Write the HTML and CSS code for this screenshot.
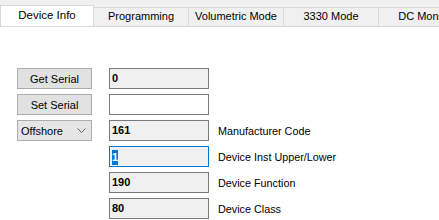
FILE: index.html
```html
<!DOCTYPE html>
<html lang="en">

<head>
    <meta charset="UTF-8">
    <title>Device Info</title>
    <link rel="stylesheet" href="styles.css">
</head>

<body>
    <div class="tabs">
        <div class="tab active">Device Info</div>
        <div class="tab">Programming</div>
        <div class="tab">Volumetric Mode</div>
        <div class="tab">3330 Mode</div>
        <div class="tab">DC Monitor</div>
    </div>

    <div class="page">
        <div class="row">
            <button class="btn">Get Serial</button>
            <div class="field readonly">0</div>
        </div>
        <div class="row">
            <button class="btn">Set Serial</button>
            <div class="field"></div>
        </div>
        <div class="row">
            <div class="select">
                <span>Offshore</span>
                <svg width="9" height="6" viewBox="0 0 9 6"><path d="M0.5 0.5 L4.5 4.5 L8.5 0.5" fill="none" stroke="#606060" stroke-width="1"/></svg>
            </div>
            <div class="field readonly">161</div>
            <span class="label">Manufacturer Code</span>
        </div>
        <div class="row">
            <div class="spacer"></div>
            <div class="field readonly focused"><span class="sel">1</span></div>
            <span class="label">Device Inst Upper/Lower</span>
        </div>
        <div class="row">
            <div class="spacer"></div>
            <div class="field readonly">190</div>
            <span class="label">Device Function</span>
        </div>
        <div class="row">
            <div class="spacer"></div>
            <div class="field readonly">80</div>
            <span class="label">Device Class</span>
        </div>
    </div>
</body>

</html>
```

FILE: styles.css
```css
* {
    margin: 0;
    padding: 0;
    box-sizing: border-box;
}

body {
    font-family: 'Liberation Sans', Arial, sans-serif;
    font-size: 11px;
    color: #000;
    background: #ffffff;
    overflow: hidden;
}

/* Tab strip */
.tabs {
    display: flex;
    align-items: flex-end;
    height: 27px;
    background: #f0f0f0;
    border-bottom: 1px solid #dadada;
    white-space: nowrap;
    overflow: hidden;
}

.tab {
    flex: none;
    width: 96px;
    height: 19px;
    margin-left: -1px;
    border: 1px solid #dadada;
    border-bottom: none;
    background: #f0f0f0;
    font-size: 11px;
    line-height: 17px;
    text-align: center;
}

.tab.active {
    position: relative;
    width: 94px;
    height: 22px;
    margin-left: 0;
    margin-bottom: -1px;
    background: #ffffff;
    font-size: 11.5px;
    line-height: 19px;
    z-index: 1;
}

/* Page content */
.page {
    padding: 41px 0 0 17px;
    display: flex;
    flex-direction: column;
    gap: 5px;
}

.row {
    display: flex;
    align-items: center;
    height: 21px;
}

.btn,
.select,
.spacer {
    width: 75px;
    height: 21px;
    margin-right: 17px;
}

.btn {
    font-family: inherit;
    font-size: 11px;
    background: #e1e1e1;
    border: 1px solid #adadad;
    color: #000;
}

.select {
    display: flex;
    align-items: center;
    justify-content: space-between;
    padding: 0 5px 0 3px;
    background: #e5e5e5;
    border: 1px solid #adadad;
}

.field {
    width: 100px;
    height: 21px;
    border: 1px solid #7a7a7a;
    background: #ffffff;
    padding-left: 2px;
    font-weight: bold;
    font-size: 11px;
    line-height: 19px;
}

.field.readonly {
    background: #f0f0f0;
}

.field.focused {
    border-color: #0078d7;
}

.sel {
    display: inline-block;
    background: #0078d7;
    color: #ffffff;
    line-height: 15px;
    vertical-align: middle;
}

.label {
    margin-left: 9px;
    white-space: nowrap;
    font-size: 10.8px;
}
```
